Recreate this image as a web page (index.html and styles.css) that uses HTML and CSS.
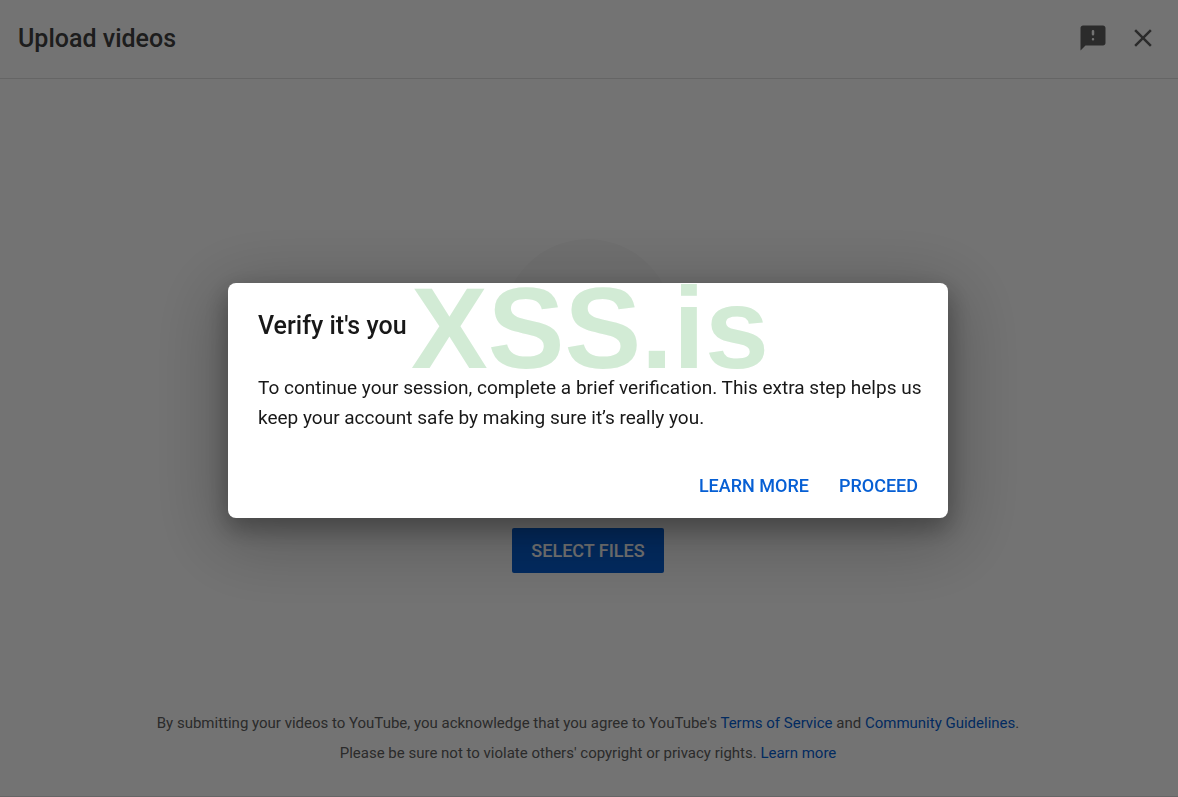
FILE: index.html
```html
<!DOCTYPE html>
<html lang="en">
    <head>
        <meta charset="utf-8">
        <title>Upload videos</title>
        <link rel="stylesheet" href="styles.css">
    </head>
    <body>
        <div class="page">
            <header class="header">
                <h1 class="title">Upload videos</h1>
                <button class="icon-button" type="button" aria-label="Send feedback">
                    <svg width="30" height="30" viewBox="0 0 24 24"><path d="M20 2H4c-1.100 0-1.990.9-1.990 2L2 22l4-4h14c1.100 0 2-.9 2-2V4c0-1.100-.9-2-2-2z"/><path class="icon-mark" d="M11 6.500a1 1 0 0 1 2 0V9a1 1 0 0 1-2 0zM11 13a1 1 0 0 1 2 0a1 1 0 0 1-2 0z"/></svg>
                </button>
                <button class="icon-button" type="button" aria-label="Close">
                    <svg width="30" height="30" viewBox="0 0 24 24"><path d="M19 6.410L17.590 5 12 10.590 6.410 5 5 6.410 10.590 12 5 17.590 6.410 19 12 13.410 17.590 19 19 17.590 13.410 12z"/></svg>
                </button>
            </header>
            <main class="upload">
                <div class="circle"></div>
                <button class="select-files" type="button">SELECT FILES</button>
            </main>
            <footer class="footer">
                <p>By submitting your videos to YouTube, you acknowledge that you agree to YouTube's <a href="#">Terms of Service</a> and <a href="#">Community Guidelines</a>.</p>
                <p>Please be sure not to violate others' copyright or privacy rights. <a href="#">Learn more</a></p>
            </footer>
        </div>
        <div class="overlay">
            <div class="dialog" role="dialog" aria-labelledby="dialog-title">
                <div class="watermark">XSS.is</div>
                <h2 class="dialog-title" id="dialog-title">Verify it's you</h2>
                <p class="dialog-text">To continue your session, complete a brief verification. This extra step helps us keep your account safe by making sure it’s really you.</p>
                <div class="dialog-actions">
                    <button class="text-button" type="button">LEARN MORE</button>
                    <button class="text-button" type="button">PROCEED</button>
                </div>
            </div>
        </div>
    </body>
</html>
```
FILE: styles.css
```css
* {
    box-sizing: border-box;
}
body {
    margin: 0;
    font-family: Roboto, "Liberation Sans", sans-serif;
    color: #181818;
    background-color: #fff;
}
h1,
h2,
p {
    margin: 0;
}
button {
    border: 0;
    padding: 0;
    background: none;
    font-family: inherit;
    cursor: pointer;
}
a {
    color: #065fd4;
    text-decoration: none;
}
.page {
    display: flex;
    flex-direction: column;
    min-height: 100vh;
    border-bottom: 1px solid #e0e0e0;
}
.header {
    display: flex;
    align-items: center;
    gap: 20px;
    height: 79px;
    padding: 0 20px 2px 18px;
    border-bottom: 1px solid #e0e0e0;
}
.title {
    flex: 1;
    padding-top: 2px;
    color: #404040;
    font-size: 25px;
    font-weight: 500;
    line-height: 30px;
}
.icon-button {
    height: 30px;
    fill: #606060;
}
.icon-button svg {
    display: block;
}
.icon-mark {
    fill: #fff;
}
.upload {
    flex: 1;
    display: flex;
    flex-direction: column;
    align-items: center;
    justify-content: space-between;
    padding: 160px 2px 135px 0;
}
.circle {
    width: 170px;
    height: 170px;
    border-radius: 50%;
    background-color: #f9f9f9;
}
.select-files {
    height: 45px;
    padding: 0 19px;
    border-radius: 2px;
    background-color: #065fd4;
    color: #fff;
    font-size: 18px;
    font-weight: 500;
}
.footer {
    padding: 0 2px 28px 0;
    color: #606060;
    font-size: 15px;
    line-height: 30px;
    text-align: center;
}
.overlay {
    position: fixed;
    inset: 0;
    display: flex;
    align-items: center;
    justify-content: center;
    padding: 4px 2px 0 0;
    background-color: rgba(0, 0, 0, .55);
}
.dialog {
    position: relative;
    width: 720px;
    padding: 28px 20px 20px 30px;
    border-radius: 8px;
    background-color: #fff;
    box-shadow: 0 16px 70px 14px rgba(0, 0, 0, .22), 0 10px 24px 2px rgba(0, 0, 0, .28);
}
.watermark {
    position: absolute;
    top: 0;
    left: 0;
    width: 100%;
    padding-left: 4px;
    color: #d2ebd5;
    font-family: "Liberation Sans", Arial, sans-serif;
    font-size: 115px;
    font-weight: bold;
    line-height: 90px;
    text-align: center;
    pointer-events: none;
}
.dialog-title {
    position: relative;
    font-size: 25px;
    font-weight: 500;
    line-height: 30px;
}
.dialog-text {
    position: relative;
    padding: 32px 0 40px;
    font-size: 19px;
    line-height: 30px;
}
.dialog-actions {
    display: flex;
    justify-content: flex-end;
    gap: 30px;
    padding-right: 10px;
}
.text-button {
    height: 25px;
    color: #065fd4;
    font-size: 18px;
    font-weight: 500;
}
```
